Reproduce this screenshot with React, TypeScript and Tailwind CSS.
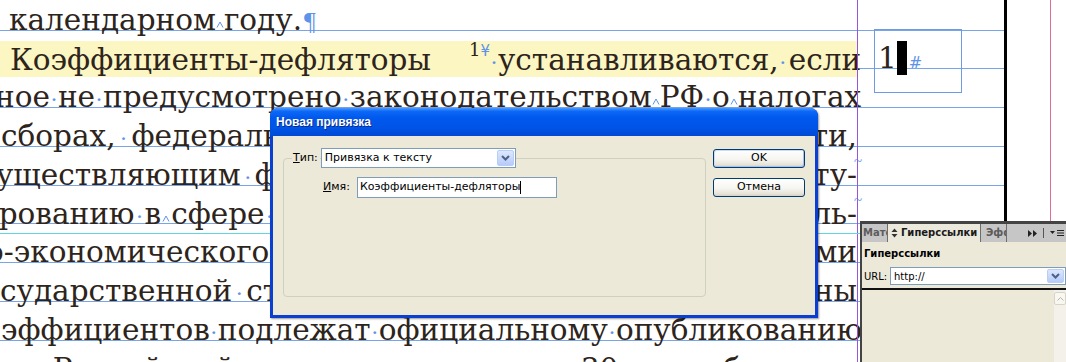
import React from "react";

function Dot() {
  return <span className="shrink-0 font-['Liberation_Serif',serif] text-[24px] leading-none text-[#5d93e8]">·</span>;
}

function Caret() {
  return (
    <svg width="8" height="10" viewBox="0 0 8 10" className="shrink-0">
      <path d="M1 7.5L4 2L7 7.5" fill="none" stroke="#5d93e8" strokeWidth="1" />
    </svg>
  );
}

function W({ children }: { children: React.ReactNode }) {
  return <span className="shrink-0 whitespace-nowrap">{children}</span>;
}

function tokens(s: string) {
  return s.split(" ").map((t, i) =>
    t === "·" ? <Dot key={i} /> : t === "^" ? <Caret key={i} /> : <W key={i}>{t}</W>
  );
}

function Row({ children, highlight }: { children?: React.ReactNode; highlight?: boolean }) {
  return (
    <div className="h-[38.75px] shrink-0 border-b border-[#78a4e8]">
      <div
        className={
          "relative mt-[10px] h-[36px] w-[857px] leading-[36px] " +
          (highlight ? "bg-[#fcf6c3]" : "")
        }
      >
        {children}
      </div>
    </div>
  );
}

function Split({ left, right, ml, gap, tilde }: { left: string; right: string; ml: string; gap: string; tilde?: boolean }) {
  return (
    <div className={"flex items-baseline " + ml}>
      <div className={"flex shrink-0 items-baseline whitespace-nowrap " + gap}>{tokens(left)}</div>
      <div className="flex-1" />
      <W>{right}</W>
      {tilde && (
        <span className="absolute right-[-5px] top-[-14px] font-['Liberation_Serif',serif] text-[15px] text-[#5d93e8]">~</span>
      )}
    </div>
  );
}

function DropBtn() {
  return (
    <div className="flex h-full w-[17px] items-center justify-center rounded-[2px] border border-[#b9cdf6] bg-[linear-gradient(to_bottom,#dde8fe,#b6cbf9)]">
      <svg width="9" height="6" viewBox="0 0 9 6">
        <path d="M1 1L4.5 4.5L8 1" fill="none" stroke="#4d6185" strokeWidth="2" />
      </svg>
    </div>
  );
}

function XPButton({ children, def }: { children: React.ReactNode; def?: boolean }) {
  return (
    <div
      className={
        "flex h-[19px] w-[92px] items-center justify-center rounded-[3px] border border-[#003c74] bg-[linear-gradient(to_bottom,#ffffff_0%,#f6f5f0_55%,#e6e3da_85%,#d6d0c5_100%)] text-[11px] text-black " +
        (def ? "shadow-[inset_1px_1px_0_#cedcf5,inset_-1px_-1px_0_#a9bfec]" : "")
      }
    >
      {children}
    </div>
  );
}

export default function App() {
  return (
    <div className="relative h-[362px] w-[1066px] overflow-hidden bg-white font-['DejaVu_Serif',serif] text-[29.5px] text-[#2d241b]">
      <div className="flex h-full">
        <div className="-mt-[8.25px] flex w-[1004px] shrink-0 flex-col">
          <Row>
            <div className="ml-[9px] flex items-baseline">
              <W>календарном</W>
              <Caret />
              <W>году.</W>
              <span className="ml-[2px] font-['Liberation_Serif',serif] text-[26px] text-[#5d93e8]">¶</span>
            </div>
          </Row>
          <Row highlight>
            <div className="flex items-baseline pl-[10px]">
              <W>Коэффициенты-дефляторы</W>
              <span className="ml-[38px] shrink-0 whitespace-nowrap leading-none">
                <span className="text-[18px] [vertical-align:14px]">1</span>
                <span className="font-['DejaVu_Sans',sans-serif] text-[15px] text-[#5d93e8] [vertical-align:14px]">¥</span>
              </span>
              <Dot />
              <W>устанавливаются,</W>
              <div className="flex flex-1 justify-end pr-[2px]">
                <Dot />
              </div>
              <W>если</W>
            </div>
          </Row>
          <Row>
            <div className="-ml-[5px] flex items-baseline justify-between">
              {tokens("ное · не · предусмотрено · законодательством ^ РФ · о ^ налогах")}
            </div>
          </Row>
          <Row>
            <Split ml="ml-[1px]" gap="gap-[4px]" left="сборах, · федеральным · органом" right="ти," />
          </Row>
          <Row>
            <Split ml="-ml-[4px]" gap="gap-[3px]" left="уществляющим · функции · по" right="ту-" tilde />
          </Row>
          <Row>
            <Split ml="-ml-[21px]" gap="gap-[1px]" left="ированию · в ^ сфере · социально" right="ль-" tilde />
          </Row>
          <Row>
            <Split ml="-ml-[14px]" gap="gap-[3px]" left="о-экономического · развития" right="ми" />
          </Row>
          <Row>
            <Split ml="ml-[0px]" gap="gap-[3px]" left="сударственной · статистики" right="ны" />
          </Row>
          <Row>
            <div className="ml-[1px] flex items-baseline justify-between">
              {tokens("эффициентов · подлежат · официальному · опубликованию")}
            </div>
          </Row>
          <Row>
            <div className="ml-[2px] flex items-baseline gap-[4px]">
              {tokens("в · «Российской · газете» · не · позднее · 30 · сентября")}
            </div>
          </Row>
        </div>
        <div className="h-full w-[3px] shrink-0 bg-black" />
        <div className="w-[43px] shrink-0" />
        <div className="h-full w-px shrink-0 bg-[#e0708f]" />
      </div>

      {/* frame edge and extra guide */}
      <div className="absolute left-[857px] top-0 h-full w-px bg-[#9457dc]" />
      <div className="absolute left-0 top-[233px] h-px w-[862px] bg-[#5fd6e6]" />

      {/* small text frame */}
      <div className="absolute left-[874px] top-[29px] h-[64px] w-[88px] border border-[#6f9be0]">
        <div className="ml-[3px] mt-[10px] flex h-[36px] items-baseline leading-[36px]">
          <span>1</span>
          <span className="mt-[1px] h-[34px] w-[10px] self-start bg-black" />
          <span className="ml-[2px] font-['DejaVu_Sans',sans-serif] text-[16px] italic text-[#5d93e8]">#</span>
        </div>
      </div>

      {/* dialog */}
      <div className="absolute left-[270px] top-[108px] flex h-[210px] w-[548px] flex-col rounded-t-[8px] bg-[#0a3fd2] font-['DejaVu_Sans',sans-serif] shadow-[1px_1px_2px_rgba(0,0,0,0.4)]">
        <div className="flex h-[28px] shrink-0 items-center rounded-t-[8px] bg-[linear-gradient(to_bottom,#4a9bff_0%,#0c68f6_12%,#0058ee_35%,#0054e6_70%,#0049d6_100%)] pl-[6px] font-['Liberation_Sans',sans-serif] text-[12px] font-bold text-white [text-shadow:1px_1px_0_#0a2a8a]">
          Новая привязка
        </div>
        <div className="mx-[3px] mb-[3px] flex flex-1 bg-[#ece9d8] text-[11px] text-black">
          <div className="ml-[10px] mt-[22px] h-[139px] w-[423px] rounded-[4px] border border-[#d0d0bf]">
            <div className="-mt-[11px] flex h-[20px] items-center">
              <span className="ml-[8px] bg-[#ece9d8] pl-[1px] pr-[2px]">
                <span className="underline">Т</span>ип:
              </span>
              <div className="ml-[1px] flex h-[20px] w-[195px] items-center border border-[#7f9db9] bg-white p-px">
                <span className="flex-1 pl-[2px]">Привязка к тексту</span>
                <DropBtn />
              </div>
              <div className="flex-1" />
            </div>
            <div className="mt-[9px] flex h-[21px] items-center">
              <span className="ml-[39px] w-[34px]">
                <span className="underline">И</span>мя:
              </span>
              <div className="flex h-[21px] w-[200px] items-center border border-[#7f9db9] bg-white pl-[2px]">
                <span>Коэффициенты-дефляторы</span>
                <span className="h-[13px] w-px bg-black" />
              </div>
            </div>
          </div>
          <div className="ml-[7px] mt-[13px] flex flex-col gap-[10px]">
            <XPButton def>OK</XPButton>
            <XPButton>Отмена</XPButton>
          </div>
        </div>
      </div>

      {/* hyperlinks panel */}
      <div className="absolute left-[860px] top-[221px] flex h-[141px] w-[206px] flex-col border-l-2 border-t-[3px] border-[#434343] bg-[#ece9d8] font-['DejaVu_Sans',sans-serif] text-[10px]">
        <div className="flex h-[18px] shrink-0 bg-[#c6c6c6] font-bold leading-[18px]">
          <div className="w-[26px] overflow-hidden whitespace-nowrap border-r border-[#6e6e6e] pl-[1px] text-[#5c5c5c]">
            Материалы
          </div>
          <div className="flex w-[92px] items-center gap-[3px] bg-[#ebe8dc] pl-[3px] text-[#1a1a1a]">
            <svg width="7" height="10" viewBox="0 0 7 10">
              <path d="M3.5 0.5L6.5 4H0.5Z M3.5 9.5L6.5 6H0.5Z" fill="#333" />
            </svg>
            Гиперссылки
          </div>
          <div className="w-[27px] overflow-hidden whitespace-nowrap border-x border-[#6e6e6e] pl-[5px] text-[#5c5c5c]">
            Эффекты
          </div>
          <div className="flex flex-1 items-center justify-end gap-[6px] pr-[2px]">
            <svg width="9" height="7" viewBox="0 0 9 7">
              <path d="M0 0L4 3.5L0 7Z M5 0L9 3.5L5 7Z" fill="#222" />
            </svg>
            <div className="h-[10px] w-px bg-[#555]" />
            <svg width="14" height="8" viewBox="0 0 14 8">
              <path d="M0 2H5L2.5 5Z" fill="#222" />
              <path d="M7 1.5H14M7 4H14M7 6.5H14" stroke="#222" strokeWidth="1" />
            </svg>
          </div>
        </div>
        <div className="ml-[2px] mt-[5px] font-bold leading-[14px] text-black">Гиперссылки</div>
        <div className="mt-[6px] flex h-[18px] items-center">
          <span className="ml-[2px] w-[26px] text-black">URL:</span>
          <div className="flex h-[18px] flex-1 items-center border border-[#7f9db9] bg-white p-px">
            <span className="flex-1 pl-[2px] text-black">http://</span>
            <DropBtn />
          </div>
        </div>
        <div className="mt-[3px] h-[2px] bg-[#111]" />
        <div className="flex flex-1">
          <div className="flex-1" />
          <div className="w-[12px] bg-[#f3f1ea] pt-[2px]">
            <div className="flex h-[13px] items-center justify-center rounded-[2px] border border-[#d8d5c8] bg-[#f8f7f2]">
              <svg width="7" height="4" viewBox="0 0 7 4">
                <path d="M0.5 3.5L3.5 0.5L6.5 3.5" fill="none" stroke="#b8b5a8" strokeWidth="1" />
              </svg>
            </div>
          </div>
        </div>
      </div>
    </div>
  );
}
